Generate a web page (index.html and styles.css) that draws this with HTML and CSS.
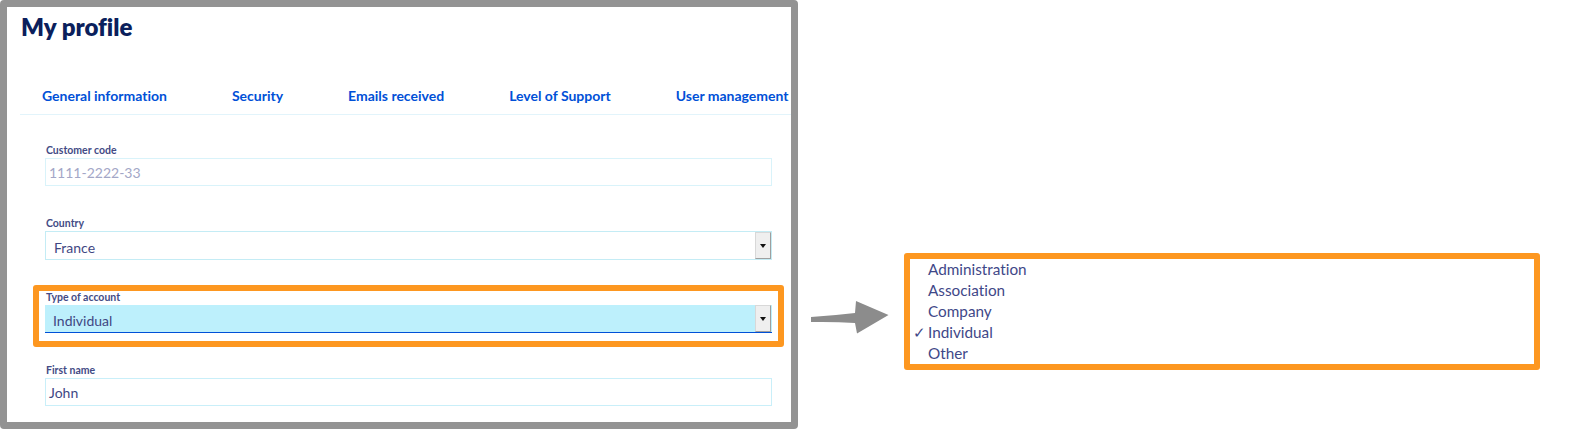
FILE: index.html
```html
<!DOCTYPE html>
<html lang="en">
<head>
<meta charset="utf-8">
<title>My profile</title>
<link rel="stylesheet" href="styles.css">
</head>
<body>
<div class="page">
  <div class="frame">
    <h1 class="title">My profile</h1>
    <nav class="tabs">
      <span class="tab">General information</span>
      <span class="tab">Security</span>
      <span class="tab">Emails received</span>
      <span class="tab">Level of Support</span>
      <span class="tab">User management</span>
    </nav>
    <div class="form">
      <div class="field">
        <div class="label">Customer code</div>
        <div class="input input-disabled">1111-2222-33</div>
      </div>
      <div class="field">
        <div class="label">Country</div>
        <div class="select"><span class="select-value">France</span><span class="select-btn"><span class="caret"></span></span></div>
      </div>
      <div class="field highlight">
        <div class="label">Type of account</div>
        <div class="select select-active"><span class="select-value">Individual</span><span class="select-btn"><span class="caret"></span></span></div>
      </div>
      <div class="field">
        <div class="label">First name</div>
        <div class="input">John</div>
      </div>
    </div>
  </div>
  <svg class="arrow" width="80" height="36" viewBox="810 300 80 36" aria-hidden="true">
    <path d="M811,317 Q834,315.5 855,313 L856,301 L888.5,315 L857,333.5 L855,323 Q834,321.5 811,322 Z" fill="#8c8c8c"/>
  </svg>
  <ul class="options">
    <li class="option">Administration</li>
    <li class="option">Association</li>
    <li class="option">Company</li>
    <li class="option option-checked"><span class="check">✓</span>Individual</li>
    <li class="option">Other</li>
  </ul>
</div>
</body>
</html>
```
FILE: styles.css
```css
* { box-sizing: border-box; }
html, body { margin: 0; padding: 0; background: #ffffff; }
body {
  font-family: Lato, "Open Sans", sans-serif;
  font-variant-ligatures: none;
}

.page {
  display: flex;
  align-items: flex-start;
  width: 1569px;
  height: 430px;
}

.frame {
  width: 798px;
  height: 429px;
  border: 7px solid #939393;
  border-radius: 4px;
  overflow: hidden;
  flex: none;
}

.title {
  margin: 0;
  padding: 4px 0 0 14px;
  height: 38px;
  font-size: 24px;
  line-height: 32px;
  font-weight: 800;
  color: #0b1f5c;
}

.tabs {
  margin: 41px 0 0 13px;
  width: 790px;
  padding: 0 0 8px 22px;
  display: flex;
  gap: 65px;
  white-space: nowrap;
  border-bottom: 1px solid #e2f4fb;
}

.tab {
  font-size: 14px;
  line-height: 20px;
  font-weight: 700;
  color: #0050d7;
  flex: none;
}

.form {
  padding: 29px 0 0 38px;
  width: 765px;
  display: flex;
  flex-direction: column;
  gap: 31px;
}

.field { display: flex; flex-direction: column; }

.label {
  font-size: 10.5px;
  line-height: 12px;
  font-weight: 700;
  color: #434b85;
  margin: 0 0 2px 1px;
}

.input {
  height: 28px;
  border: 1px solid #c9eff9;
  padding: 1px 3px 0;
  font-size: 14px;
  line-height: 26px;
  color: #3f4783;
}

.input-disabled { color: #a3a7c7; border-color: #d9f3fa; }

.select {
  height: 29px;
  border: 1px solid #c4ecf5;
  display: flex;
  align-items: stretch;
  justify-content: space-between;
  font-size: 14px;
  color: #3f4783;
}

.select-value { padding: 2px 0 0 8px; line-height: 27px; }

.select-btn {
  width: 16px;
  background: #efefef;
  border: 1px solid #d8d8d8;
  border-right-color: #9f9f9f;
  border-bottom-color: #9f9f9f;
  display: flex;
  align-items: center;
  justify-content: center;
}

.caret {
  width: 0;
  height: 0;
  border-left: 3px solid transparent;
  border-right: 3px solid transparent;
  border-top: 4px solid #111111;
  margin-top: 1px;
}

.highlight {
  margin: -6px -12px -14px;
  border: 6px solid #fd9720;
  border-radius: 3px;
  padding: 0 6px 8px;
}

.select-active {
  height: 28px;
  background: #bdf0fc;
  border: none;
  border-bottom: 1px solid #0050d7;
}

.select-active .select-btn { margin-right: 1px; }

.arrow { flex: none; margin: 300px 0 0 12px; }

.options {
  list-style: none;
  margin: 253px 0 0 14px;
  padding: 0 0 0 18px;
  width: 636px;
  height: 117px;
  border: 6px solid #fd9720;
  border-radius: 3px;
  flex: none;
}

.option {
  position: relative;
  font-size: 15.3px;
  line-height: 21px;
  color: #3f4888;
}

.check {
  position: absolute;
  left: -15px;
  top: 0;
}
```
